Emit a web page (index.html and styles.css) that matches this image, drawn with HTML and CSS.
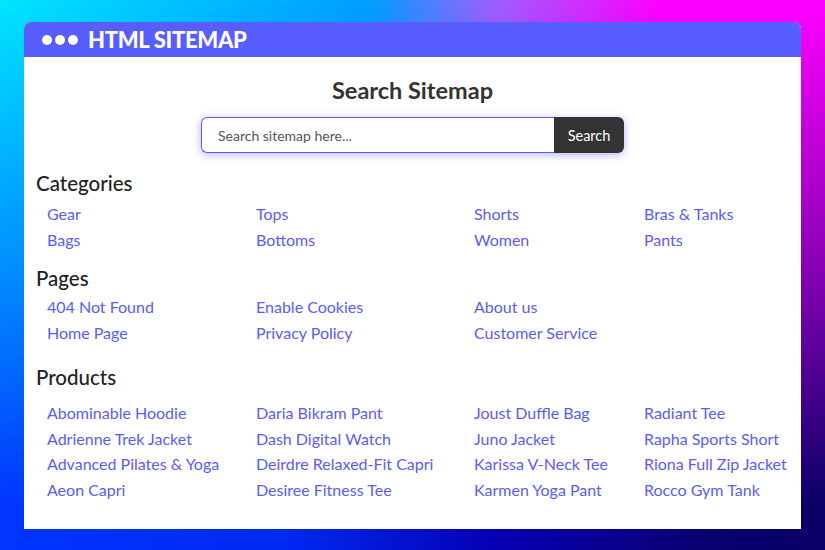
FILE: index.html
```html
<!DOCTYPE html>
<html lang="en">
<head>
<meta charset="utf-8">
<title>HTML Sitemap</title>
<link rel="stylesheet" href="styles.css">
</head>
<body>
<div class="card">
  <div class="bar">
    <span class="dots"><i></i><i></i><i></i></span>
    <span class="bar-title">HTML SITEMAP</span>
  </div>
  <div class="content">
    <h1 class="title">Search Sitemap</h1>
    <form class="search">
      <input class="search-input" type="text" placeholder="Search sitemap here...">
      <button class="search-btn" type="button">Search</button>
    </form>

    <section class="sec sec-cat">
      <h2 class="sec-title">Categories</h2>
      <div class="links">
        <a href="#">Gear</a><a href="#">Tops</a><a href="#">Shorts</a><a href="#">Bras &amp; Tanks</a>
        <a href="#">Bags</a><a href="#">Bottoms</a><a href="#">Women</a><a href="#">Pants</a>
      </div>
    </section>

    <section class="sec sec-pages">
      <h2 class="sec-title">Pages</h2>
      <div class="links">
        <a href="#">404 Not Found</a><a href="#">Enable Cookies</a><a href="#">About us</a><span></span>
        <a href="#">Home Page</a><a href="#">Privacy Policy</a><a href="#">Customer Service</a><span></span>
      </div>
    </section>

    <section class="sec sec-prod">
      <h2 class="sec-title">Products</h2>
      <div class="links">
        <a href="#">Abominable Hoodie</a><a href="#">Daria Bikram Pant</a><a href="#">Joust Duffle Bag</a><a href="#">Radiant Tee</a>
        <a href="#">Adrienne Trek Jacket</a><a href="#">Dash Digital Watch</a><a href="#">Juno Jacket</a><a href="#">Rapha Sports Short</a>
        <a href="#">Advanced Pilates &amp; Yoga</a><a href="#">Deirdre Relaxed-Fit Capri</a><a href="#">Karissa V-Neck Tee</a><a href="#">Riona Full Zip Jacket</a>
        <a href="#">Aeon Capri</a><a href="#">Desiree Fitness Tee</a><a href="#">Karmen Yoga Pant</a><a href="#">Rocco Gym Tank</a>
      </div>
    </section>
  </div>
</div>
</body>
</html>
```
FILE: styles.css
```css
html, body {
  margin: 0;
  padding: 0;
}
body {
  position: relative;
  min-height: 100vh;
  font-family: "Lato", "Open Sans", sans-serif;
  background: linear-gradient(90deg, #00e6ff 0%, #00b4ff 30%, #00a0ff 45%, #a060ff 60%, #ff00ff 80%, #ff00ff 100%);
  overflow: hidden;
}
body::before {
  content: "";
  position: fixed;
  inset: 0;
  background: linear-gradient(90deg, #0036ff 0%, #0028f0 35%, #0600b4 60%, #0a0070 85%, #0a0066 100%);
  -webkit-mask-image: linear-gradient(to bottom, transparent 0%, rgba(0,0,0,0.5) 50%, #000 92%);
  mask-image: linear-gradient(to bottom, transparent 0%, rgba(0,0,0,0.5) 50%, #000 92%);
}
.card {
  position: relative;
  z-index: 1;
  margin: 22px 24px 0;
  background: #fff;
  border-radius: 7px 7px 0 0;
}
.bar {
  height: 35px;
  background: #575dff;
  border-radius: 7px 7px 0 0;
  display: flex;
  align-items: center;
  padding-left: 18px;
  color: #fff;
}
.dots {
  display: flex;
  gap: 3px;
  margin-right: 10px;
}
.dots i {
  width: 10px;
  height: 10px;
  border-radius: 50%;
  background: #fff;
}
.bar-title {
  font-weight: 900;
  font-size: 22px;
  letter-spacing: -0.3px;
}
.content {
  padding: 19px 12px 27px;
}
.title {
  margin: 0;
  text-align: center;
  font-size: 23.5px;
  line-height: 28px;
  font-weight: 700;
  color: #333;
}
.search {
  margin: 13px auto 0;
  width: 423px;
  height: 36px;
  display: flex;
  border-radius: 6px;
  box-shadow: 0 2px 8px rgba(90, 90, 255, 0.45);
}
.search-input {
  flex: 1;
  min-width: 0;
  box-sizing: border-box;
  height: 36px;
  border: 1px solid #5a5cff;
  border-right: none;
  border-radius: 6px 0 0 6px;
  padding: 0 16px;
  font-family: inherit;
  font-size: 14px;
  color: #444;
  outline: none;
}
.search-input::placeholder {
  color: #555;
}
.search-btn {
  width: 70px;
  height: 36px;
  border: none;
  border-radius: 0 6px 6px 0;
  background: #333;
  color: #fff;
  font-family: inherit;
  font-size: 14.5px;
  padding: 0;
}
.sec-title {
  margin: 0;
  font-size: 20.5px;
  line-height: 24px;
  font-weight: 500;
  color: #222;
}
.links {
  display: grid;
  grid-template-columns: 209px 218px 170px auto;
  margin-left: 11px;
}
.links a {
  font-size: 16px;
  line-height: 25.5px;
  color: #5a5cf6;
  text-decoration: none;
  white-space: nowrap;
}
.sec-cat { margin-top: 18px; }
.sec-cat .links { margin-top: 6px; }
.sec-pages { margin-top: 14px; }
.sec-pages .links { margin-top: 4px; }
.sec-prod { margin-top: 20px; }
.sec-prod .links { margin-top: 11px; }
```
